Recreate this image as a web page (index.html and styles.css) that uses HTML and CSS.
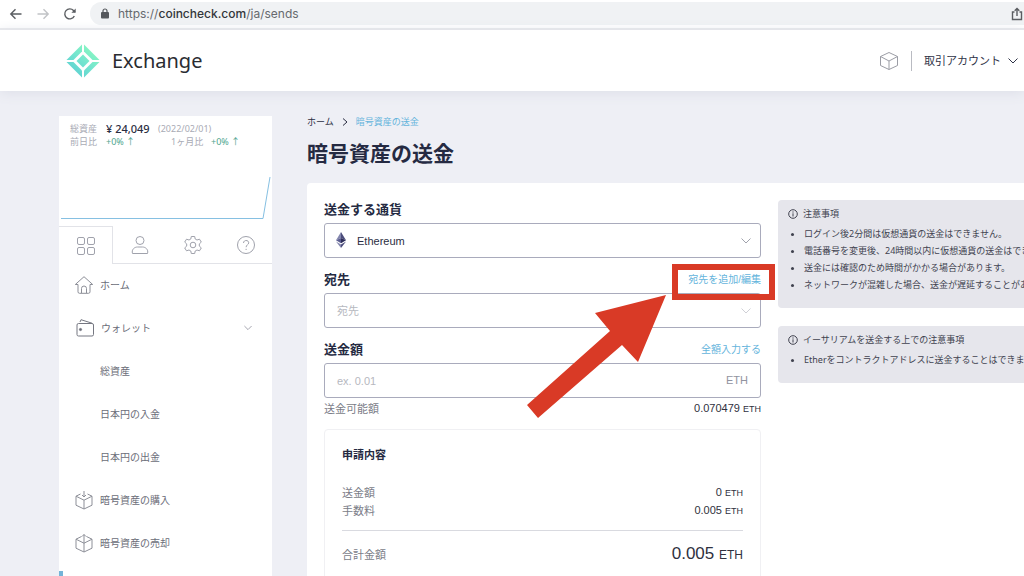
FILE: index.html
```html
<!DOCTYPE html>
<html lang="ja">
<head>
<meta charset="utf-8">
<meta name="viewport" content="width=device-width, initial-scale=1">
<title>暗号資産の送金</title>
<link rel="stylesheet" href="styles.css">
</head>
<body>
<div class="browser-bar">
  <button class="nav-btn" type="button" aria-label="戻る"><svg class="i14" viewBox="0 0 14 14"><path d="M12.500 7H2M6.500 2.200 1.800 7l4.700 4.800"/></svg></button>
  <button class="nav-btn nav-btn-off" type="button" aria-label="進む"><svg class="i14" viewBox="0 0 14 14"><path d="M1.500 7H12M7.500 2.200 12.200 7l-4.700 4.800"/></svg></button>
  <button class="nav-btn" type="button" aria-label="再読み込み"><svg class="i14" viewBox="0 0 14 14"><path d="M11.300 9A5 5 0 1 1 10.500 3.500L12 5"/><path d="M12.700 1.500v4.300H8.400z" fill="currentColor" stroke="none"/></svg></button>
  <div class="url">
    <svg class="lock" viewBox="0 0 8 11"><rect x="0" y="4" width="8" height="6.500" rx="1" fill="#55585c"/><path d="M2 4.500V3a2 2 0 0 1 4 0v1.500" fill="none" stroke="#55585c" stroke-width="1.200"/></svg>
    <span class="url-text">https://<span class="host">coincheck.com</span>/ja/sends</span>
    <button class="share" type="button" aria-label="共有"><svg class="i14" viewBox="0 0 14 14"><path d="M4.500 5H2.500v7.500h9V5h-2M7 9V1.500M4.700 3.700 7 1.400l2.300 2.300"/></svg></button>
  </div>
</div>

<header class="header">
  <a class="brand" href="#">
    <svg class="logo" viewBox="0 0 34 34">
      <defs><linearGradient id="mint" gradientUnits="userSpaceOnUse" x1="28" y1="4" x2="6" y2="30"><stop offset="0" stop-color="#8af8c0"/><stop offset="0.500" stop-color="#74e5cf"/><stop offset="1" stop-color="#5cd0d2"/></linearGradient></defs>
      <g fill="url(#mint)">
        <path d="M16 .5v7L7.500 16H.5z"/><path d="M18 .5v7l8.500 8.500h7z"/>
        <path d="M.5 18h7l8.500 8.500v7z"/><path d="M33.500 18h-7L18 26.500v7z"/>
        <path d="M17 10.500 23.500 17 17 23.500 10.500 17z"/>
      </g>
    </svg>
    <span>Exchange</span>
  </a>
  <svg class="cube" viewBox="0 0 20 20"><path d="M10 1.500 18.500 5.500v9L10 18.500 1.500 14.500v-9zM1.500 5.500 10 10l8.500-4.500M10 10v8.500"/></svg>
  <button class="account" type="button">取引アカウント<svg class="chev" viewBox="0 0 10 6"><path d="M.5.5 5 5 9.500.5"/></svg></button>
</header>

<div class="page">
  <aside class="sidebar">
    <div class="asset">
      <div class="asset-row"><span class="asset-name">総資産</span><strong>¥ 24,049</strong><span class="date">(2022/02/01)</span></div>
      <div class="asset-row"><span class="asset-name">前日比</span><span class="up prev">+0% ↑</span><span class="month">1ヶ月比</span><span class="up">+0% ↑</span></div>
      <svg class="chart" viewBox="0 0 213 46" preserveAspectRatio="none"><path d="M2 43.500H204L211 2"/></svg>
    </div>
    <div class="tabs">
      <button class="tab tab-on" type="button" aria-label="メニュー"><svg class="i20" viewBox="0 0 20 20"><rect x="1.500" y="1.500" width="7" height="7" rx="1.500"/><rect x="11.500" y="1.500" width="7" height="7" rx="1.500"/><rect x="1.500" y="11.500" width="7" height="7" rx="1.500"/><rect x="11.500" y="11.500" width="7" height="7" rx="1.500"/></svg></button>
      <button class="tab" type="button" aria-label="アカウント"><svg class="i20" viewBox="0 0 20 20"><circle cx="10" cy="5.500" r="4"/><path d="M2.500 18.500c-1.200-4 2-6.500 5-6.500h5c3 0 6.200 2.500 5 6.500z"/></svg></button>
      <button class="tab" type="button" aria-label="設定"><svg class="i20" viewBox="0 0 20 20"><circle cx="10" cy="10" r="2.800"/><path d="M8.300 1.500h3.400l.5 2.500 1.800 1 2.500-.8 1.800 2.900-2 1.800v2.200l2 1.800-1.800 2.900-2.500-.8-1.800 1-.5 2.500H8.300l-.5-2.500-1.800-1-2.500.8-1.800-2.900 2-1.800V8.900l-2-1.800 1.800-2.900 2.500.8 1.800-1z"/></svg></button>
      <button class="tab" type="button" aria-label="ヘルプ"><svg class="i20" viewBox="0 0 20 20"><circle cx="10" cy="10" r="8.500"/><path d="M7.500 8c0-3.300 5.200-3.300 5.200-.2 0 2-2.600 2-2.600 4.400M10.100 13.800v1.200"/></svg></button>
    </div>
    <nav class="menu">
      <a class="item" href="#"><svg class="i20" viewBox="0 0 20 20"><path d="M4 9.500H1.300L10 1.700l8.700 7.800H16v7.300a1.500 1.500 0 0 1-1.500 1.500h-9A1.500 1.500 0 0 1 4 16.800zM7.500 18v-4.500a2.500 2.500 0 0 1 5 0V18"/></svg>ホーム</a>
      <a class="item" href="#"><svg class="i20 wallet" viewBox="0 0 20 20"><rect x="2" y="5.500" width="16.500" height="12.500" rx="1.500"/><path d="M5 4 6 1.700l11 3.500"/><circle cx="5.500" cy="11.500" r="1.100" fill="#6b6d78"/></svg>ウォレット<svg class="chev chev-menu" viewBox="0 0 10 6"><path d="M.5.5 5 5 9.500.5"/></svg></a>
      <a class="item sub" href="#">総資産</a>
      <a class="item sub" href="#">日本円の入金</a>
      <a class="item sub" href="#">日本円の出金</a>
      <a class="item" href="#"><svg class="i20" viewBox="0 0 20 20"><path d="M6.500 4 2 6.200v9L10 19l8-3.800v-9L13.500 4M2 6.200l8 4 8-4M10 10.200V19M10 1v6M8 5l2 2 2-2"/></svg>暗号資産の購入</a>
      <a class="item" href="#"><svg class="i20" viewBox="0 0 20 20"><path d="M7.500 3.500 2 6.200v9L10 19l8-3.800v-9l-5.500-2.700M2 6.200l8 4 8-4M10 19V1.500M8 3.500l2-2 2 2"/></svg>暗号資産の売却</a>
      <div class="current"></div>
    </nav>
  </aside>

  <main class="main">
    <div class="crumbs"><a class="crumb" href="#">ホーム</a><svg class="crumb-sep" viewBox="0 0 6 8"><path d="M1 .5 5 4 1 7.500"/></svg><a class="crumb crumb-on" href="#">暗号資産の送金</a></div>
    <h1>暗号資産の送金</h1>
    <section class="card">
      <form class="form">
        <div class="label-row"><label for="coin">送金する通貨</label></div>
        <div class="field">
          <svg class="eth" viewBox="0 0 10 16"><path d="M5 0v6L0 8.300z" fill="#8285ad"/><path d="M5 0v6l5 2.300z" fill="#4b4c7b"/><path d="M0 8.300 5 6v5.300z" fill="#5b5d90"/><path d="M10 8.300 5 6v5.300z" fill="#2d2d59"/><path d="M0 9.500 5 12.500V16z" fill="#8285ad"/><path d="M10 9.500 5 12.500V16z" fill="#4b4c7b"/></svg>
          <select id="coin" class="control coin"><option>Ethereum</option></select>
          <svg class="chev chev-field" viewBox="0 0 10 6"><path d="M.5.5 5 5 9.500.5"/></svg>
        </div>
        <div class="label-row"><label for="dest">宛先</label>
          <div class="callout"><a class="link" href="#">宛先を追加/編集</a><span class="frame"></span>
            <svg class="arrow" viewBox="0 0 139 123"><path d="M139 0 68 18 83 36 0 110l11 13 84-73 16 17z" fill="#d93a26"/></svg></div>
        </div>
        <div class="field">
          <select id="dest" class="control empty"><option>宛先</option></select>
          <svg class="chev chev-field chev-pale" viewBox="0 0 10 6"><path d="M.5.5 5 5 9.500.5"/></svg>
        </div>
        <div class="label-row"><label for="amount">送金額</label><a class="link" href="#">全額入力する</a></div>
        <div class="field">
          <input id="amount" class="control" type="text" placeholder="ex. 0.01">
          <span class="unit">ETH</span>
        </div>
        <div class="row balance"><span>送金可能額</span><span class="num">0.070479 <small>ETH</small></span></div>

        <div class="summary">
          <h2>申請内容</h2>
          <div class="row"><span>送金額</span><span class="num">0 <small>ETH</small></span></div>
          <div class="row"><span>手数料</span><span class="num">0.005 <small>ETH</small></span></div>
          <div class="row total"><span>合計金額</span><span class="num big">0.005 <small>ETH</small></span></div>
        </div>
      </form>
      <div class="notices">
        <section class="notice">
          <h3><svg class="info" viewBox="0 0 10 10"><circle cx="5" cy="5" r="4.300"/><path d="M5 4.300v3.200M5 2.400v1.200"/></svg>注意事項</h3>
          <ul>
            <li>ログイン後2分間は仮想通貨の送金はできません。</li>
            <li>電話番号を変更後、24時間以内に仮想通貨の送金はできません。</li>
            <li>送金には確認のため時間がかかる場合があります。</li>
            <li>ネットワークが混雑した場合、送金が遅延することがあります。</li>
          </ul>
        </section>
        <section class="notice">
          <h3><svg class="info" viewBox="0 0 10 10"><circle cx="5" cy="5" r="4.300"/><path d="M5 4.300v3.200M5 2.400v1.200"/></svg>イーサリアムを送金する上での注意事項</h3>
          <ul><li>Etherをコントラクトアドレスに送金することはできません。</li></ul>
        </section>
      </div>
    </section>
  </main>
</div>
</body>
</html>
```
FILE: styles.css
```css
* { box-sizing: border-box; }
body {
  margin: 0;
  height: 100vh;
  overflow: hidden;
  display: flex;
  flex-direction: column;
  background: #eeeff5;
  color: #2b2e42;
  font-family: "Liberation Sans", "Noto Sans CJK JP", sans-serif;
  font-size: 10px;
}
a { color: inherit; text-decoration: none; }
button { border: 0; padding: 0; background: none; font: inherit; color: inherit; display: flex; align-items: center; justify-content: center; }
svg { display: block; flex: none; fill: none; stroke: currentColor; }
h1, h2, h3, ul { margin: 0; padding: 0; }
.i14 { width: 14px; height: 14px; stroke-width: 1.4; }
.i20 { width: 20px; height: 20px; stroke-width: 1; }
.chev { width: 10px; height: 6px; }

/* browser toolbar */
.browser-bar { flex: none; height: 30px; display: flex; gap: 13px; padding: 2px 0 3px 9px; background: #fff; border-bottom: 2px solid #e8e9ec; color: #5a5d61; }
.nav-btn { width: 14px; }
.nav-btn-off { color: #c1c3c6; }
.url { flex: 1; display: flex; align-items: center; gap: 9px; padding: 0 0 0 11px; border-radius: 12px 0 0 12px; background: #f0f2f4; }
.lock { width: 8px; height: 11px; stroke: none; }
.url-text { flex: 1; font-family: Inter, sans-serif; font-size: 12px; color: #66696e; }
.host { color: #33363a; font-weight: 500; }

/* site header */
.header { flex: none; height: 61px; display: flex; align-items: center; padding: 0 6px 0 66px; background: #fff; box-shadow: 0 2px 12px #dddfe8; }
.brand { flex: 1; display: flex; align-items: center; gap: 12px; font: 400 20px/30px "Noto Sans", "Open Sans", sans-serif; color: #2a2c31; }
.logo { width: 34px; height: 34px; stroke: none; }
.cube { width: 20px; height: 20px; color: #9b9da5; stroke-width: 1; margin-right: 12px; }
.account { gap: 7px; height: 20px; padding-left: 12px; border-left: 1px solid #b9bbc2; font-size: 11px; line-height: 18px; color: #2f3347; }

/* layout */
.page { flex: 1; min-height: 0; display: flex; gap: 35px; padding: 25px 0 0 59px; }
.sidebar { flex: none; width: 213px; background: #fff; }
.main { flex: 1; min-width: 0; }

/* asset widget */
.asset { height: 110px; padding-top: 6px; display: flex; flex-direction: column; }
.asset-row { display: flex; align-items: center; height: 13px; padding-left: 11px; font: 9px/13px "Noto Sans", "Noto Sans CJK JP", sans-serif; color: #a9abb5; white-space: nowrap; }
.asset-name { width: 36px; }
.asset-row strong { width: 52px; font-size: 11px; font-weight: 500; color: #2b2e42; }
.up { color: #4fa58f; }
.prev { width: 65px; }
.month { width: 40px; }
.chart { width: 100%; height: 46px; margin-top: auto; margin-bottom: 5px; color: #86c0e2; }

.tabs { display: flex; height: 38px; }
.tab { flex: 1; border-bottom: 1px solid #e2e3e8; color: #a0a2ac; }
.tab-on { border: solid #e2e3e8; border-width: 1px 1px 0 0; }

.menu { margin-top: -1px; }
.item { display: flex; align-items: center; gap: 6px; height: 43px; padding: 0 20px 0 15px; color: #6b6d78; }
.item .i20 { color: #8d8f98; }
.item .wallet { color: #757781; margin-left: 1px; }
.sub { padding-left: 41px; }
.chev-menu { margin-left: auto; width: 8px; color: #8f919c; }
.current { height: 36px; margin-top: 7px; border-left: 4px solid #74b4d8; }

/* main column */
.crumbs { display: flex; align-items: center; gap: 8px; height: 11px; font-size: 9px; }
.crumb-on { color: #64b4dc; }
.crumb-sep { width: 6px; height: 8px; }
h1 { margin: 11px 0 13px; font-size: 21px; line-height: 32px; font-weight: 700; color: #252a42; }
.card { display: grid; grid-template-columns: minmax(0, 437px) minmax(0, 1fr); gap: 17px; padding: 17px 0 0 17px; min-height: 100%; border-radius: 4px 0 0 0; background: #fff; }

.label-row { display: flex; align-items: center; justify-content: space-between; height: 20px; margin-bottom: 3px; }
.label-row label { font-size: 13px; line-height: 20px; font-weight: 700; color: #252a42; }
.link { display: block; font-size: 10px; line-height: 20px; color: #64b4dc; }
.field { position: relative; height: 35px; margin-bottom: 12px; }
.control { appearance: none; display: block; width: 100%; height: 100%; padding: 0 12px; border: 1px solid #a9abbc; border-radius: 3px; background: #fff; font: 11px "Liberation Sans", "Noto Sans CJK JP", sans-serif; color: #2b2e42; outline: 0; }
.control::placeholder { color: #b6b8c0; }
.coin { padding-left: 32px; }
.empty { color: #b6b8c0; }
.eth { position: absolute; left: 12px; top: 9px; width: 10px; height: 16px; stroke: none; }
.chev-field { position: absolute; right: 10px; top: 15px; color: #a0a2ac; }
.chev-pale { color: #cfd0d6; }
.unit { position: absolute; right: 13px; top: 0; line-height: 35px; font-size: 11px; color: #9193a0; }

.row { display: flex; align-items: center; justify-content: space-between; height: 18px; font-size: 11px; color: #7b7d88; }
.num { color: #2f3140; }
.num small { font-size: 9px; }
.balance { height: 20px; margin: -12px 0 11px; }

.summary { padding: 16px 17px 24px; border: 1px solid #f0f0f3; border-radius: 4px; height: 240px; }
.summary h2 { margin-bottom: 19px; font-size: 11px; line-height: 18px; font-weight: 700; color: #252a42; }
.total { height: 46px; margin-top: 11px; border-top: 1px solid #d9dae0; }
.big { font-size: 17px; }
.big small { font-size: 12px; }

/* notices */
.notices { display: flex; flex-direction: column; gap: 18px; }
.notice { padding: 5px 0 15px 10px; border-radius: 4px 0 0 4px; background: #e6e6ec; overflow: hidden; white-space: nowrap; font: 9px/17px "Noto Sans", "Noto Sans CJK JP", sans-serif; color: #40424f; }
.notice h3 { display: flex; align-items: center; gap: 5px; height: 17px; margin-bottom: 3px; font-size: inherit; font-weight: 400; }
.notice ul { padding-left: 16px; }
.info { width: 10px; height: 10px; }

/* annotation */
.callout { position: relative; }
.frame { position: absolute; inset: -6px -14px -10px -16px; border: 6px solid #d93a26; z-index: 2; pointer-events: none; }
.arrow { position: absolute; right: 95px; top: 25px; width: 139px; height: 123px; stroke: none; z-index: 2; pointer-events: none; }
```
